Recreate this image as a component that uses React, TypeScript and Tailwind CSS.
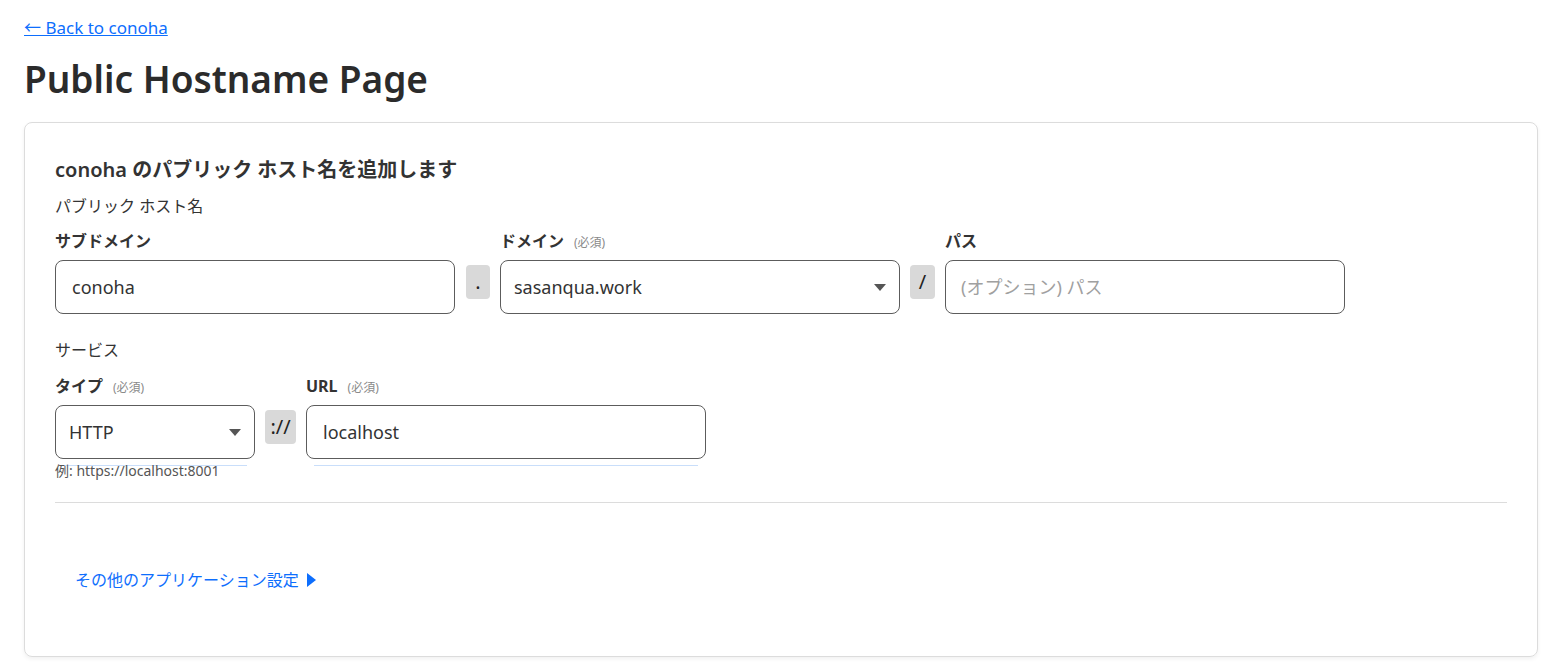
import React from 'react';

const font = { fontFamily: '"Noto Sans", "Noto Sans CJK JP", sans-serif' };

const Required = () => <span className="ml-[10px] text-[12px] font-normal text-[#8a8a8a]">(必須)</span>;

const Sep: React.FC<{ w: string; children: React.ReactNode }> = ({ w, children }) => (
  <div className={`mt-[5px] flex h-[34px] shrink-0 items-center justify-center rounded-[4px] bg-[#d9d9d9] text-[20px] text-[#222] ${w}`}>
    {children}
  </div>
);

const Caret = () => (
  <svg className="h-[7px] w-[12px] text-[#555]" viewBox="0 0 12 7" fill="currentColor">
    <path d="M0 0h12L6 7z" />
  </svg>
);

export default function App() {
  return (
    <div className="min-h-screen bg-white pl-[24px] pr-[5px] pt-[16px] text-[#333]" style={font}>
      <a href="#" className="text-[17px] leading-[24px] text-[#0d6efd] underline">
        ← Back to conoha
      </a>
      <h1 className="mt-[15px] mb-[19px] text-[37px] font-semibold leading-[48px] text-[#2b2b2b]">Public Hostname Page</h1>

      <div className="rounded-[8px] border border-[#dcdcdc] px-[30px] pt-[35px] pb-[64px] shadow-[0_2px_4px_rgba(0,0,0,0.06)]">
        <h2 className="text-[20px] font-semibold leading-[24px]">conoha のパブリック ホスト名を追加します</h2>
        <div className="mt-[12px] text-[16px] leading-[24px]">パブリック ホスト名</div>

        <div className="mt-[11px] flex items-start gap-[10px]">
          <div className="w-[400px]">
            <div className="h-[24px] text-[16px] font-bold leading-[24px]">サブドメイン</div>
            <div className="mt-[7px] flex h-[54px] items-center rounded-[8px] border border-[#5c5c5c] px-[16px] text-[18px]">conoha</div>
          </div>
          <div className="pl-[1px] pt-[31px]">
            <Sep w="w-[24px]">.</Sep>
          </div>
          <div className="w-[400px]">
            <div className="flex h-[24px] items-baseline text-[16px] font-bold leading-[24px]">
              ドメイン<Required />
            </div>
            <div className="mt-[7px] flex h-[54px] items-center justify-between rounded-[8px] border border-[#5c5c5c] pl-[13px] pr-[13px] text-[18px]">
              <span>sasanqua.work</span>
              <Caret />
            </div>
          </div>
          <div className="pt-[31px]">
            <Sep w="w-[25px]">/</Sep>
          </div>
          <div className="w-[400px]">
            <div className="h-[24px] text-[16px] font-bold leading-[24px]">パス</div>
            <div className="mt-[7px] flex h-[54px] items-center rounded-[8px] border border-[#5c5c5c] px-[15px] text-[18px] text-[#a0a0a0]">
              (オプション) パス
            </div>
          </div>
        </div>

        <div className="mt-[24px] text-[16px] leading-[24px]">サービス</div>

        <div className="mt-[12px] flex items-start gap-[10px]">
          <div className="w-[200px]">
            <div className="flex h-[24px] items-baseline text-[16px] font-bold leading-[24px]">
              タイプ<Required />
            </div>
            <div className="mt-[7px] flex h-[54px] items-center justify-between rounded-[8px] border border-[#5c5c5c] pl-[13px] pr-[13px] text-[18px]">
              <span>HTTP</span>
              <Caret />
            </div>
            <div className="mx-[8px] mt-[6px] h-px bg-[#c9defa]" />
            <div className="-mt-[3px] whitespace-nowrap text-[14px] leading-[16px] text-[#555]">例: https://localhost:8001</div>
          </div>
          <div className="pt-[31px]">
            <Sep w="w-[31px]">://</Sep>
          </div>
          <div className="w-[400px]">
            <div className="flex h-[24px] items-baseline text-[16px] font-bold leading-[24px]">
              URL<Required />
            </div>
            <div className="mt-[7px] flex h-[54px] items-center rounded-[8px] border border-[#5c5c5c] px-[16px] text-[18px]">localhost</div>
            <div className="mx-[8px] mt-[6px] h-px bg-[#c9defa]" />
          </div>
        </div>

        <div className="mt-[23px] h-px bg-[#dcdcdc]" />

        <div className="mt-[65px] flex items-center gap-[8px] pl-[20px] text-[16px] leading-[24px] text-[#0d6efd]">
          <span>その他のアプリケーション設定</span>
          <svg className="h-[14px] w-[9px]" viewBox="0 0 9 14" fill="currentColor">
            <path d="M0 0l9 7-9 7z" />
          </svg>
        </div>
      </div>
    </div>
  );
}
